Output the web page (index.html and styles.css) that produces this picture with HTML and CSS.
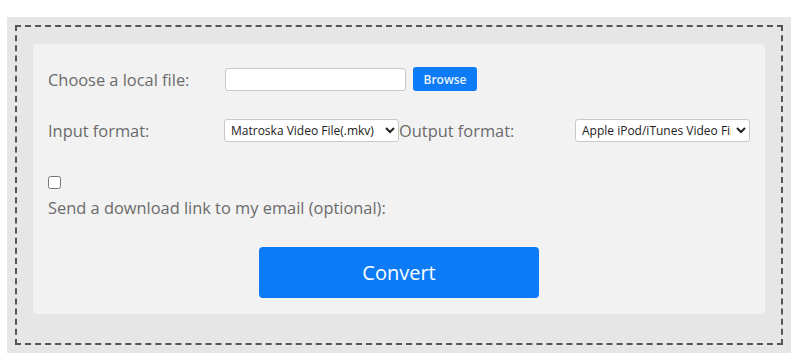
FILE: index.html
```html
<!DOCTYPE html>
<html lang="en">
<head>
    <meta charset="UTF-8">
    <meta name="viewport" content="width=device-width, initial-scale=1.0">
    <title>Video converter</title>
    <link rel="stylesheet" href="styles.css">
</head>
<body>

    <div class="converter">
        <div class="drop-zone">
            <form class="convert-form">
                <div class="form-row">
                    <label class="field-label" for="file">Choose a local file:</label>
                    <input type="text" id="file" class="file-input">
                    <button type="button" class="browse-btn">Browse</button>
                </div>

                <div class="form-row formats">
                    <label class="field-label" for="informat">Input format:</label>
                    <select id="informat" class="format-select">
                        <option>Matroska Video File(.mkv)</option>
                    </select>
                    <label class="field-label" for="outformat">Output format:</label>
                    <select id="outformat" class="format-select">
                        <option>Apple iPod/iTunes Video File(.m4v)</option>
                    </select>
                </div>

                <div class="email-row">
                    <input type="checkbox" id="email" class="email-check">
                    <label for="email" class="email-label">Send a download link to my email (optional):</label>
                </div>

                <div class="submit-container">
                    <button type="button" class="convert-btn">Convert</button>
                </div>
            </form>
        </div>
    </div>

</body>
</html>
```

FILE: styles.css
```css
body {
    font-family: "Open Sans", "Noto Sans", sans-serif;
    background-color: #fff;
    margin: 0;
    padding: 17px 0 0 7px;
}

.converter {
    width: 784px;
    height: 336px;
    box-sizing: border-box;
    padding: 8px;
    background-color: #e6e6e6;
}

.drop-zone {
    height: 320px;
    box-sizing: border-box;
    border: 2px dashed #555;
    padding: 17px 16px 0 16px;
}

.convert-form {
    background-color: #f2f2f2;
    border-radius: 4px;
    height: 270px;
    box-sizing: border-box;
    padding: 23px 15px 0 15px;
}

.form-row {
    display: flex;
    align-items: center;
    height: 24px;
}

.formats {
    margin-top: 27px;
}

.field-label {
    width: 176px;
    flex-shrink: 0;
    font-size: 16.4px;
    color: #6b6b6b;
}

.file-input {
    width: 181px;
    height: 23px;
    box-sizing: border-box;
    border: 1px solid #c8c8c8;
    border-radius: 3px;
    background: #fff;
    margin: 0 0 0 1px;
}

.browse-btn {
    width: 64px;
    height: 24px;
    margin-left: 7px;
    padding: 0;
    border: none;
    border-radius: 3px;
    background-color: #0d7bf6;
    color: #eaf3ff;
    font-family: inherit;
    font-size: 12px;
    font-weight: 600;
}

.format-select {
    width: 175px;
    height: 23px;
    flex-shrink: 0;
    box-sizing: border-box;
    border: 1px solid #c8c8c8;
    border-radius: 3px;
    background: #fff;
    color: #222;
    font-family: inherit;
    font-size: 12px;
    padding: 0 2px;
}

.email-row {
    margin-top: 34px;
}

.email-check {
    display: block;
    width: 13px;
    height: 13px;
    margin: 0;
}

.email-label {
    display: block;
    margin-top: 8px;
    font-size: 16.4px;
    line-height: 22px;
    color: #6b6b6b;
}

.submit-container {
    text-align: center;
    margin-top: 28px;
}

.convert-btn {
    width: 280px;
    height: 51px;
    border: none;
    border-radius: 4px;
    background-color: #0d7bf6;
    color: #fff;
    font-family: inherit;
    font-size: 20px;
    cursor: pointer;
}
```
